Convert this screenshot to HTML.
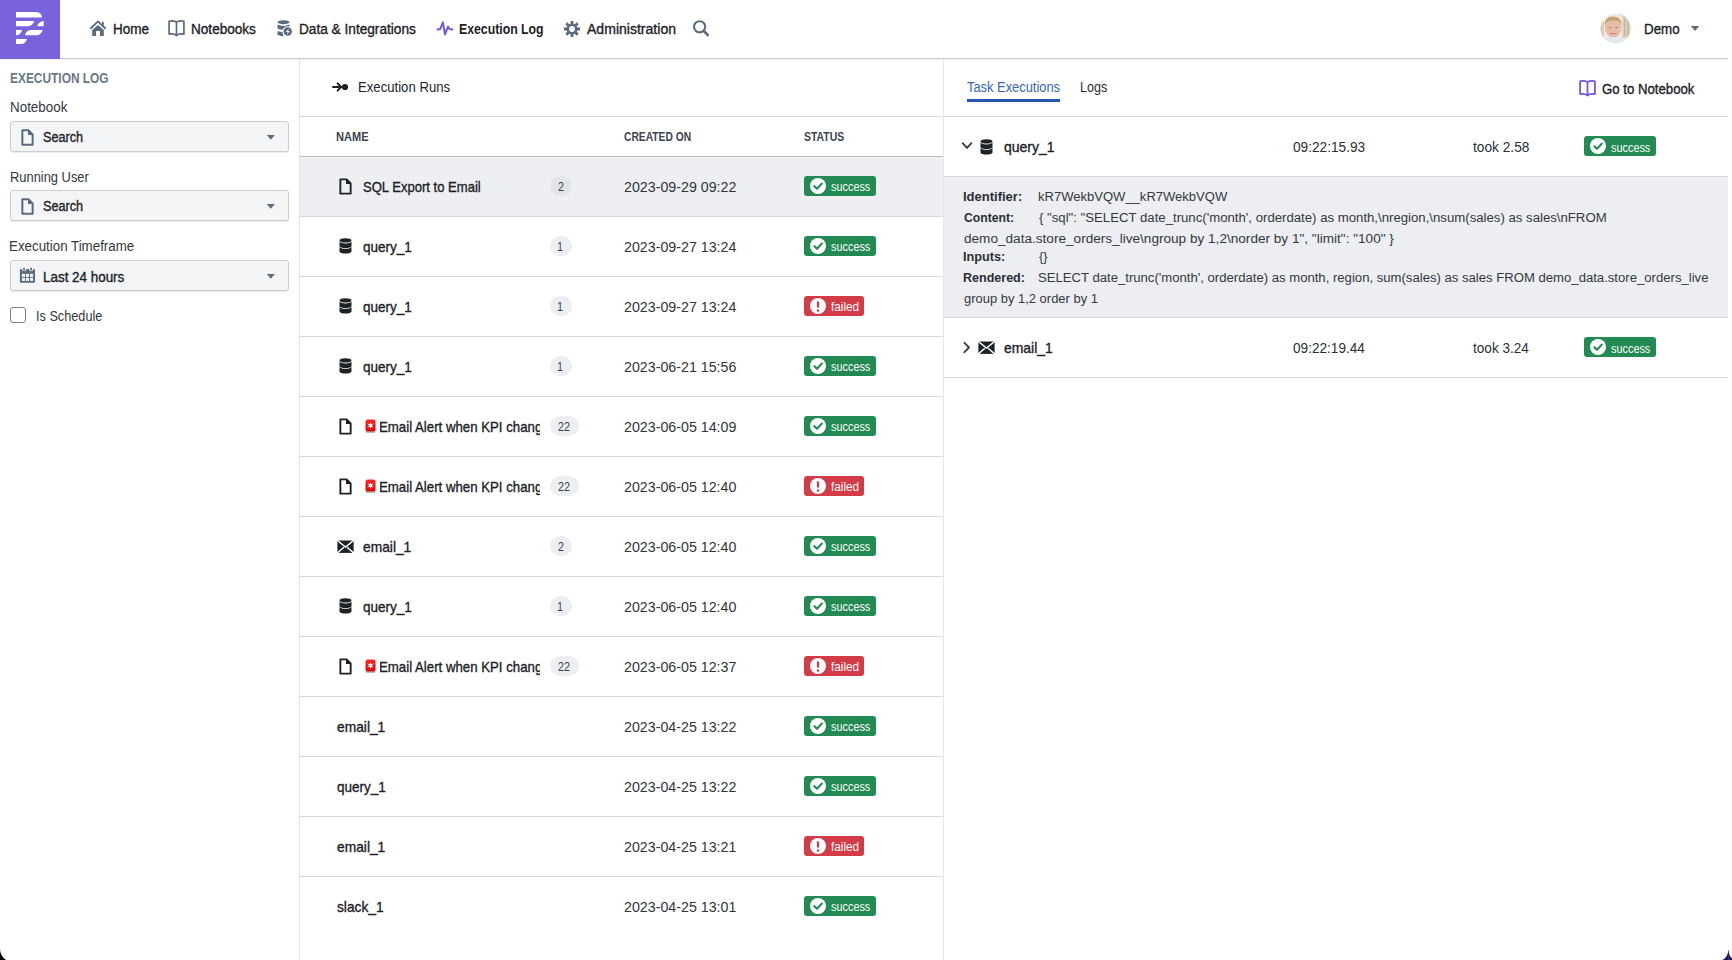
<!DOCTYPE html>
<html><head><meta charset="utf-8"><title>Execution Log</title>
<style>
html,body{margin:0;padding:0;width:1732px;height:960px;overflow:hidden;background:#fff}
body{position:relative;font-family:"Liberation Sans", sans-serif}
.t{position:absolute;white-space:pre;line-height:20px;transform-origin:0 0;font-family:"Liberation Sans", sans-serif}
svg{display:block}
</style></head><body>
<div style="position:absolute;left:0px;top:0px;width:1732px;height:58px;background:#fff"></div>
<div style="position:absolute;left:0px;top:58px;width:1728px;height:1px;background:#c8c8c8"></div>
<div style="position:absolute;left:0px;top:59px;width:1728px;height:1px;background:#f3f3f3"></div>
<div style="position:absolute;left:299px;top:59px;width:1px;height:901px;background:#e4e4e4"></div>
<div style="position:absolute;left:943px;top:59px;width:1px;height:901px;background:#e6e6e6"></div>
<div style="position:absolute;left:300px;top:116px;width:643px;height:1px;background:#d4d8e0"></div>
<div style="position:absolute;left:300px;top:156px;width:643px;height:1px;background:#babbbe"></div>
<div style="position:absolute;left:300px;top:157px;width:643px;height:59px;background:#eeeff2"></div>
<div style="position:absolute;left:300px;top:157px;width:643px;height:1px;background:#f3f4f6"></div>
<div style="position:absolute;left:300px;top:216px;width:643px;height:1px;background:#d4d8e0"></div>
<div style="position:absolute;left:300px;top:276px;width:643px;height:1px;background:#d4d8e0"></div>
<div style="position:absolute;left:300px;top:336px;width:643px;height:1px;background:#d4d8e0"></div>
<div style="position:absolute;left:300px;top:396px;width:643px;height:1px;background:#d4d8e0"></div>
<div style="position:absolute;left:300px;top:456px;width:643px;height:1px;background:#d4d8e0"></div>
<div style="position:absolute;left:300px;top:516px;width:643px;height:1px;background:#d4d8e0"></div>
<div style="position:absolute;left:300px;top:576px;width:643px;height:1px;background:#d4d8e0"></div>
<div style="position:absolute;left:300px;top:636px;width:643px;height:1px;background:#d4d8e0"></div>
<div style="position:absolute;left:300px;top:696px;width:643px;height:1px;background:#d4d8e0"></div>
<div style="position:absolute;left:300px;top:756px;width:643px;height:1px;background:#d4d8e0"></div>
<div style="position:absolute;left:300px;top:816px;width:643px;height:1px;background:#d4d8e0"></div>
<div style="position:absolute;left:300px;top:876px;width:643px;height:1px;background:#d4d8e0"></div>
<div style="position:absolute;left:944px;top:116px;width:784px;height:1px;background:#d4d8e0"></div>
<div style="position:absolute;left:944px;top:176px;width:784px;height:1px;background:#d3d7de"></div>
<div style="position:absolute;left:944px;top:177px;width:784px;height:140px;background:#edeef2"></div>
<div style="position:absolute;left:944px;top:317px;width:784px;height:1px;background:#d3d7de"></div>
<div style="position:absolute;left:944px;top:377px;width:784px;height:1px;background:#d4d8e0"></div>
<div style="position:absolute;left:967px;top:99px;width:93px;height:3px;background:#2458b3"></div>
<div style="position:absolute;left:0px;top:0px;width:60px;height:59px;background:#7a62da"></div>
<svg style="position:absolute;left:0px;top:0px" width="60" height="59" viewBox="0 0 60 59"><g fill="#fff"><path d="M16 12H36Q41.8 12.3 42 17.5H16Z"/><path d="M16 21.1H34.3Q32.6 26.2 28.5 26.2H16Z"/><path d="M37.2 26.2Q38.8 21.3 43.7 21.1V26.2Z"/><path d="M16 30H22.2Q20.7 35.3 16 35.3Z"/><path d="M24.8 35.3Q26.4 30 31.5 30H42.6Q41 35.3 36.5 35.3Z"/><path d="M16 39H27Q25.6 44.1 21 44.1H16Z"/></g></svg>
<svg style="position:absolute;left:89px;top:19px" width="18" height="19" viewBox="0 0 18 19"><g fill="#5b6b7f"><path d="M1.9 9.2L9 2.4L16.1 9.2" fill="none" stroke="#5b6b7f" stroke-width="1.9" stroke-linecap="round" stroke-linejoin="round"/><rect x="13" y="2.8" width="1.8" height="4.4"/><path d="M3.2 11L9 5.9L14.8 11V17H11V12.1H7V17H3.2Z"/></g></svg>
<svg style="position:absolute;left:168px;top:20px" width="17" height="17" viewBox="0 0 17 17"><path d="M1.1 1.3Q4.2 0.3 7.4 1.5L8.5 2.4L9.6 1.5Q12.8 0.3 15.9 1.3V14.2Q12.8 13.6 10 14.5L8.5 15.6L7 14.5Q4.2 13.6 1.1 14.2Z M8.5 2.4V15.2" fill="none" stroke="#5b6b7f" stroke-width="1.7" stroke-linejoin="round"/></svg>
<svg style="position:absolute;left:276px;top:19px" width="18" height="19" viewBox="0 0 18 19"><g fill="#5b6b7f"><ellipse cx="7.5" cy="3.2" rx="6" ry="2"/><path d="M1.5 5.6Q7.5 8.2 13.5 5.6V7.6Q10 8.6 7.8 11Q4 11 1.5 9.6Z"/><path d="M1.5 12Q4 13 7 13Q6.6 15.2 7.8 17.2Q3.2 17 1.5 15.8Z"/><circle cx="11.7" cy="12.5" r="4.8" stroke="#fff" stroke-width="1.1"/></g><path d="M13.1 9.2L9.9 13.1H11.8L10.7 16.1L13.7 12H11.8Z" fill="#fff"/></svg>
<svg style="position:absolute;left:436px;top:20px" width="18" height="17" viewBox="0 0 18 17"><polyline points="1.6,9.4 4.3,9 6.9,2.4 9,14.4 12,6.6 13.5,9 16.4,9.4" fill="none" stroke="#7358de" stroke-width="2" stroke-linejoin="round" stroke-linecap="round"/></svg>
<svg style="position:absolute;left:562.5px;top:19.5px" width="18" height="18" viewBox="0 0 18 18"><g fill="#5b6b7f"><rect x="7.6" y="0.9" width="2.8" height="3.8" rx="0.4" transform="rotate(0 9 9)"/><rect x="7.6" y="0.9" width="2.8" height="3.8" rx="0.4" transform="rotate(45 9 9)"/><rect x="7.6" y="0.9" width="2.8" height="3.8" rx="0.4" transform="rotate(90 9 9)"/><rect x="7.6" y="0.9" width="2.8" height="3.8" rx="0.4" transform="rotate(135 9 9)"/><rect x="7.6" y="0.9" width="2.8" height="3.8" rx="0.4" transform="rotate(180 9 9)"/><rect x="7.6" y="0.9" width="2.8" height="3.8" rx="0.4" transform="rotate(225 9 9)"/><rect x="7.6" y="0.9" width="2.8" height="3.8" rx="0.4" transform="rotate(270 9 9)"/><rect x="7.6" y="0.9" width="2.8" height="3.8" rx="0.4" transform="rotate(315 9 9)"/><circle cx="9" cy="9" r="5.5"/></g><circle cx="9" cy="9" r="2.9" fill="#fff"/></svg>
<svg style="position:absolute;left:692px;top:19px" width="18" height="19" viewBox="0 0 18 19"><circle cx="7.6" cy="7.8" r="5.6" fill="none" stroke="#5b6b7f" stroke-width="2.1"/><line x1="11.8" y1="12" x2="15.8" y2="16" stroke="#5b6b7f" stroke-width="2.6" stroke-linecap="round"/></svg>
<svg style="position:absolute;left:1600px;top:13px" width="31" height="31" viewBox="0 0 31 31"><defs><clipPath id="av"><circle cx="15.5" cy="15.5" r="15"/></clipPath></defs><g clip-path="url(#av)"><rect width="31" height="31" fill="#f1ebe3"/><rect x="0" y="8" width="4" height="16" fill="#d9cfbf"/><rect x="22" y="3" width="9" height="22" fill="#ddd3c3"/><rect x="24" y="6" width="1.5" height="17" fill="#c4b8a4"/><rect x="27.5" y="6" width="1.5" height="17" fill="#c4b8a4"/><path d="M2 31Q5 23 13 23Q23 23 27 31Z" fill="#e1eaf0"/><ellipse cx="13.2" cy="14.6" rx="8.3" ry="10" fill="#e9bca6"/><path d="M4.8 12.5Q4.6 3.2 13 3.4Q21.6 3.6 21.6 12Q19.8 7.6 13 7.6Q7 7.8 4.8 12.5Z" fill="#c8a172"/><ellipse cx="10" cy="14.5" rx="1.2" ry="0.7" fill="#9a7a66"/><ellipse cx="16.5" cy="14.5" rx="1.2" ry="0.7" fill="#9a7a66"/><path d="M10 20Q13.2 22 16.6 20" stroke="#b98474" stroke-width="1" fill="none"/><path d="M20 0.5Q25 1.5 26.5 5" stroke="#e48c7c" stroke-width="2" fill="none"/></g></svg>
<svg style="position:absolute;left:1690px;top:25px" width="10" height="7" viewBox="0 0 10 7"><path d="M0.8 1H9.2L5 6Z" fill="#5b6b7f"/></svg>
<div style="position:absolute;left:10px;top:121px;width:279px;height:31px;box-sizing:border-box;background:#f4f5f7;border:1px solid #c9cdd4;border-radius:3px;box-shadow:0 1px 0 rgba(60,70,80,0.10)"></div>
<svg style="position:absolute;left:266px;top:134px" width="10" height="7" viewBox="0 0 10 7"><path d="M0.8 1H8.8L4.8 5.8Z" fill="#5b6b7f"/></svg>
<svg style="position:absolute;left:21.2px;top:129px" width="13" height="17" viewBox="0 0 13 17"><path d="M1.35 1.35H7.6L11.65 5.4V15.65H1.35Z" fill="none" stroke="#5b6b7f" stroke-width="2" stroke-linejoin="round"/><path d="M7 0.8V6H12.2Z" fill="#5b6b7f"/></svg>
<div style="position:absolute;left:10px;top:190px;width:279px;height:31px;box-sizing:border-box;background:#f4f5f7;border:1px solid #c9cdd4;border-radius:3px;box-shadow:0 1px 0 rgba(60,70,80,0.10)"></div>
<svg style="position:absolute;left:266px;top:203px" width="10" height="7" viewBox="0 0 10 7"><path d="M0.8 1H8.8L4.8 5.8Z" fill="#5b6b7f"/></svg>
<svg style="position:absolute;left:21.2px;top:198px" width="13" height="17" viewBox="0 0 13 17"><path d="M1.35 1.35H7.6L11.65 5.4V15.65H1.35Z" fill="none" stroke="#5b6b7f" stroke-width="2" stroke-linejoin="round"/><path d="M7 0.8V6H12.2Z" fill="#5b6b7f"/></svg>
<div style="position:absolute;left:10px;top:260px;width:279px;height:31px;box-sizing:border-box;background:#f4f5f7;border:1px solid #c9cdd4;border-radius:3px;box-shadow:0 1px 0 rgba(60,70,80,0.10)"></div>
<svg style="position:absolute;left:266px;top:273px" width="10" height="7" viewBox="0 0 10 7"><path d="M0.8 1H8.8L4.8 5.8Z" fill="#5b6b7f"/></svg>
<svg style="position:absolute;left:19px;top:267px" width="17" height="17" viewBox="0 0 17 17"><rect x="0.9" y="2" width="15.1" height="13.8" rx="1" fill="#5b6b7f"/><g fill="#f4f5f7"><circle cx="5" cy="2.2" r="2.1"/><circle cx="12.1" cy="2.2" r="2.1"/><rect x="2.9" y="6.8" width="3.1" height="3.1"/><rect x="6.9" y="6.8" width="3.1" height="3.1"/><rect x="11" y="6.8" width="3.1" height="3.1"/><rect x="2.9" y="10.8" width="3.1" height="3.1"/><rect x="6.9" y="10.8" width="3.1" height="3.1"/><rect x="11" y="10.8" width="3.1" height="3.1"/></g><g fill="#5b6b7f"><rect x="4.1" y="0.8" width="1.8" height="2.8" rx="0.4"/><rect x="11.2" y="0.8" width="1.8" height="2.8" rx="0.4"/></g></svg>
<div style="position:absolute;left:10px;top:307px;width:16px;height:16px;box-sizing:border-box;border:1.5px solid #76818f;border-radius:3px;background:#fff"></div>
<svg style="position:absolute;left:331px;top:81px" width="19" height="12" viewBox="0 0 19 12"><g stroke="#1d2227" stroke-width="2" fill="none" stroke-linecap="round" stroke-linejoin="round"><line x1="2" y1="6" x2="10" y2="6"/><polyline points="6.6,2.4 10,6 6.6,9.6"/></g><circle cx="14" cy="6" r="3.1" fill="#1d2227"/></svg>
<svg style="position:absolute;left:338.5px;top:177.5px" width="13" height="17" viewBox="0 0 13 17"><path d="M1.35 1.35H7.6L11.65 5.4V15.65H1.35Z" fill="none" stroke="#1d2227" stroke-width="1.9" stroke-linejoin="round"/><path d="M7 0.8V6H12.2Z" fill="#1d2227"/></svg>
<div style="position:absolute;left:550px;top:176px;width:22px;height:20px;background:#e1e4e8;border-radius:10px"></div>
<div style="position:absolute;left:804px;top:176px;width:72px;height:20px;background:#228a52;border-radius:3px"></div>
<svg style="position:absolute;left:810px;top:178px" width="16" height="16" viewBox="0 0 16 16"><circle cx="8" cy="8" r="8" fill="#fff"/><path d="M4.4 8.2L7 10.8L11.8 5.6" fill="none" stroke="#228a52" stroke-width="2.1" stroke-linecap="round" stroke-linejoin="round"/></svg>
<svg style="position:absolute;left:338.5px;top:237.5px" width="13" height="17" viewBox="0 0 13 17"><g fill="#1d2227"><ellipse cx="6.5" cy="2.4" rx="6" ry="2.2"/><path d="M0.5 3.2A6 2.2 0 0 0 12.5 3.2V7.9A6 2.2 0 0 1 0.5 7.9Z"/><path d="M0.5 8.6A6 2.2 0 0 0 12.5 8.6V13.4A6 2.2 0 0 1 0.5 13.4Z"/></g></svg>
<div style="position:absolute;left:550px;top:236px;width:22px;height:20px;background:#eceef1;border-radius:10px"></div>
<div style="position:absolute;left:804px;top:236px;width:72px;height:20px;background:#228a52;border-radius:3px"></div>
<svg style="position:absolute;left:810px;top:238px" width="16" height="16" viewBox="0 0 16 16"><circle cx="8" cy="8" r="8" fill="#fff"/><path d="M4.4 8.2L7 10.8L11.8 5.6" fill="none" stroke="#228a52" stroke-width="2.1" stroke-linecap="round" stroke-linejoin="round"/></svg>
<svg style="position:absolute;left:338.5px;top:297.5px" width="13" height="17" viewBox="0 0 13 17"><g fill="#1d2227"><ellipse cx="6.5" cy="2.4" rx="6" ry="2.2"/><path d="M0.5 3.2A6 2.2 0 0 0 12.5 3.2V7.9A6 2.2 0 0 1 0.5 7.9Z"/><path d="M0.5 8.6A6 2.2 0 0 0 12.5 8.6V13.4A6 2.2 0 0 1 0.5 13.4Z"/></g></svg>
<div style="position:absolute;left:550px;top:296px;width:22px;height:20px;background:#eceef1;border-radius:10px"></div>
<div style="position:absolute;left:804px;top:296px;width:60px;height:20px;background:#d33c47;border-radius:3px"></div>
<svg style="position:absolute;left:810px;top:298px" width="16" height="16" viewBox="0 0 16 16"><circle cx="8" cy="8" r="8" fill="#fff"/><rect x="6.9" y="3.2" width="2.2" height="6.6" rx="1" fill="#d33c47"/><circle cx="8" cy="12.4" r="1.25" fill="#d33c47"/></svg>
<svg style="position:absolute;left:338.5px;top:357.5px" width="13" height="17" viewBox="0 0 13 17"><g fill="#1d2227"><ellipse cx="6.5" cy="2.4" rx="6" ry="2.2"/><path d="M0.5 3.2A6 2.2 0 0 0 12.5 3.2V7.9A6 2.2 0 0 1 0.5 7.9Z"/><path d="M0.5 8.6A6 2.2 0 0 0 12.5 8.6V13.4A6 2.2 0 0 1 0.5 13.4Z"/></g></svg>
<div style="position:absolute;left:550px;top:356px;width:22px;height:20px;background:#eceef1;border-radius:10px"></div>
<div style="position:absolute;left:804px;top:356px;width:72px;height:20px;background:#228a52;border-radius:3px"></div>
<svg style="position:absolute;left:810px;top:358px" width="16" height="16" viewBox="0 0 16 16"><circle cx="8" cy="8" r="8" fill="#fff"/><path d="M4.4 8.2L7 10.8L11.8 5.6" fill="none" stroke="#228a52" stroke-width="2.1" stroke-linecap="round" stroke-linejoin="round"/></svg>
<svg style="position:absolute;left:338.5px;top:417.5px" width="13" height="17" viewBox="0 0 13 17"><path d="M1.35 1.35H7.6L11.65 5.4V15.65H1.35Z" fill="none" stroke="#1d2227" stroke-width="1.9" stroke-linejoin="round"/><path d="M7 0.8V6H12.2Z" fill="#1d2227"/></svg>
<svg style="position:absolute;left:364.5px;top:418.5px" width="11" height="14" viewBox="0 0 11 14"><defs><linearGradient id="sg" x1="0" y1="0" x2="0" y2="1"><stop offset="0" stop-color="#ff2a20"/><stop offset="1" stop-color="#e00000"/></linearGradient></defs><rect x="0.5" y="0.5" width="10" height="12.5" rx="2.2" fill="url(#sg)"/><rect x="1" y="12.2" width="9" height="1.6" rx="0.6" fill="#9aa4a0"/><path d="M5.5 3L6.2 5.3L8.6 4.6L6.9 6.5L8.6 8.4L6.2 7.7L5.5 10L4.8 7.7L2.4 8.4L4.1 6.5L2.4 4.6L4.8 5.3Z" fill="#fff"/></svg>
<div style="position:absolute;left:380px;top:414px;width:160px;height:24px;overflow:hidden">
<div class="t" style="left:-0.61px;top:3.00px;font-size:14.5px;font-weight:400;-webkit-text-stroke:0.35px #1d2227;color:#1d2227;transform:scaleX(0.9124);">Email Alert when KPI changes</div>
</div>
<div style="position:absolute;left:550px;top:416px;width:29px;height:20px;background:#eceef1;border-radius:10px"></div>
<div style="position:absolute;left:804px;top:416px;width:72px;height:20px;background:#228a52;border-radius:3px"></div>
<svg style="position:absolute;left:810px;top:418px" width="16" height="16" viewBox="0 0 16 16"><circle cx="8" cy="8" r="8" fill="#fff"/><path d="M4.4 8.2L7 10.8L11.8 5.6" fill="none" stroke="#228a52" stroke-width="2.1" stroke-linecap="round" stroke-linejoin="round"/></svg>
<svg style="position:absolute;left:338.5px;top:477.5px" width="13" height="17" viewBox="0 0 13 17"><path d="M1.35 1.35H7.6L11.65 5.4V15.65H1.35Z" fill="none" stroke="#1d2227" stroke-width="1.9" stroke-linejoin="round"/><path d="M7 0.8V6H12.2Z" fill="#1d2227"/></svg>
<svg style="position:absolute;left:364.5px;top:478.5px" width="11" height="14" viewBox="0 0 11 14"><defs><linearGradient id="sg" x1="0" y1="0" x2="0" y2="1"><stop offset="0" stop-color="#ff2a20"/><stop offset="1" stop-color="#e00000"/></linearGradient></defs><rect x="0.5" y="0.5" width="10" height="12.5" rx="2.2" fill="url(#sg)"/><rect x="1" y="12.2" width="9" height="1.6" rx="0.6" fill="#9aa4a0"/><path d="M5.5 3L6.2 5.3L8.6 4.6L6.9 6.5L8.6 8.4L6.2 7.7L5.5 10L4.8 7.7L2.4 8.4L4.1 6.5L2.4 4.6L4.8 5.3Z" fill="#fff"/></svg>
<div style="position:absolute;left:380px;top:474px;width:160px;height:24px;overflow:hidden">
<div class="t" style="left:-0.61px;top:3.00px;font-size:14.5px;font-weight:400;-webkit-text-stroke:0.35px #1d2227;color:#1d2227;transform:scaleX(0.9124);">Email Alert when KPI changes</div>
</div>
<div style="position:absolute;left:550px;top:476px;width:29px;height:20px;background:#eceef1;border-radius:10px"></div>
<div style="position:absolute;left:804px;top:476px;width:60px;height:20px;background:#d33c47;border-radius:3px"></div>
<svg style="position:absolute;left:810px;top:478px" width="16" height="16" viewBox="0 0 16 16"><circle cx="8" cy="8" r="8" fill="#fff"/><rect x="6.9" y="3.2" width="2.2" height="6.6" rx="1" fill="#d33c47"/><circle cx="8" cy="12.4" r="1.25" fill="#d33c47"/></svg>
<svg style="position:absolute;left:336.5px;top:539.5px" width="17" height="14" viewBox="0 0 17 14"><rect x="0.4" y="0.5" width="16.2" height="12.4" fill="#1d2227"/><path d="M0.2 0.3L8.5 7L16.8 0.3M0.2 13.1L6.9 7.2M16.8 13.1L10.1 7.2" stroke="#fff" stroke-width="1.4" fill="none"/></svg>
<div style="position:absolute;left:550px;top:536px;width:22px;height:20px;background:#eceef1;border-radius:10px"></div>
<div style="position:absolute;left:804px;top:536px;width:72px;height:20px;background:#228a52;border-radius:3px"></div>
<svg style="position:absolute;left:810px;top:538px" width="16" height="16" viewBox="0 0 16 16"><circle cx="8" cy="8" r="8" fill="#fff"/><path d="M4.4 8.2L7 10.8L11.8 5.6" fill="none" stroke="#228a52" stroke-width="2.1" stroke-linecap="round" stroke-linejoin="round"/></svg>
<svg style="position:absolute;left:338.5px;top:597.5px" width="13" height="17" viewBox="0 0 13 17"><g fill="#1d2227"><ellipse cx="6.5" cy="2.4" rx="6" ry="2.2"/><path d="M0.5 3.2A6 2.2 0 0 0 12.5 3.2V7.9A6 2.2 0 0 1 0.5 7.9Z"/><path d="M0.5 8.6A6 2.2 0 0 0 12.5 8.6V13.4A6 2.2 0 0 1 0.5 13.4Z"/></g></svg>
<div style="position:absolute;left:550px;top:596px;width:22px;height:20px;background:#eceef1;border-radius:10px"></div>
<div style="position:absolute;left:804px;top:596px;width:72px;height:20px;background:#228a52;border-radius:3px"></div>
<svg style="position:absolute;left:810px;top:598px" width="16" height="16" viewBox="0 0 16 16"><circle cx="8" cy="8" r="8" fill="#fff"/><path d="M4.4 8.2L7 10.8L11.8 5.6" fill="none" stroke="#228a52" stroke-width="2.1" stroke-linecap="round" stroke-linejoin="round"/></svg>
<svg style="position:absolute;left:338.5px;top:657.5px" width="13" height="17" viewBox="0 0 13 17"><path d="M1.35 1.35H7.6L11.65 5.4V15.65H1.35Z" fill="none" stroke="#1d2227" stroke-width="1.9" stroke-linejoin="round"/><path d="M7 0.8V6H12.2Z" fill="#1d2227"/></svg>
<svg style="position:absolute;left:364.5px;top:658.5px" width="11" height="14" viewBox="0 0 11 14"><defs><linearGradient id="sg" x1="0" y1="0" x2="0" y2="1"><stop offset="0" stop-color="#ff2a20"/><stop offset="1" stop-color="#e00000"/></linearGradient></defs><rect x="0.5" y="0.5" width="10" height="12.5" rx="2.2" fill="url(#sg)"/><rect x="1" y="12.2" width="9" height="1.6" rx="0.6" fill="#9aa4a0"/><path d="M5.5 3L6.2 5.3L8.6 4.6L6.9 6.5L8.6 8.4L6.2 7.7L5.5 10L4.8 7.7L2.4 8.4L4.1 6.5L2.4 4.6L4.8 5.3Z" fill="#fff"/></svg>
<div style="position:absolute;left:380px;top:654px;width:160px;height:24px;overflow:hidden">
<div class="t" style="left:-0.61px;top:3.00px;font-size:14.5px;font-weight:400;-webkit-text-stroke:0.35px #1d2227;color:#1d2227;transform:scaleX(0.9124);">Email Alert when KPI changes</div>
</div>
<div style="position:absolute;left:550px;top:656px;width:29px;height:20px;background:#eceef1;border-radius:10px"></div>
<div style="position:absolute;left:804px;top:656px;width:60px;height:20px;background:#d33c47;border-radius:3px"></div>
<svg style="position:absolute;left:810px;top:658px" width="16" height="16" viewBox="0 0 16 16"><circle cx="8" cy="8" r="8" fill="#fff"/><rect x="6.9" y="3.2" width="2.2" height="6.6" rx="1" fill="#d33c47"/><circle cx="8" cy="12.4" r="1.25" fill="#d33c47"/></svg>
<div style="position:absolute;left:804px;top:716px;width:72px;height:20px;background:#228a52;border-radius:3px"></div>
<svg style="position:absolute;left:810px;top:718px" width="16" height="16" viewBox="0 0 16 16"><circle cx="8" cy="8" r="8" fill="#fff"/><path d="M4.4 8.2L7 10.8L11.8 5.6" fill="none" stroke="#228a52" stroke-width="2.1" stroke-linecap="round" stroke-linejoin="round"/></svg>
<div style="position:absolute;left:804px;top:776px;width:72px;height:20px;background:#228a52;border-radius:3px"></div>
<svg style="position:absolute;left:810px;top:778px" width="16" height="16" viewBox="0 0 16 16"><circle cx="8" cy="8" r="8" fill="#fff"/><path d="M4.4 8.2L7 10.8L11.8 5.6" fill="none" stroke="#228a52" stroke-width="2.1" stroke-linecap="round" stroke-linejoin="round"/></svg>
<div style="position:absolute;left:804px;top:836px;width:60px;height:20px;background:#d33c47;border-radius:3px"></div>
<svg style="position:absolute;left:810px;top:838px" width="16" height="16" viewBox="0 0 16 16"><circle cx="8" cy="8" r="8" fill="#fff"/><rect x="6.9" y="3.2" width="2.2" height="6.6" rx="1" fill="#d33c47"/><circle cx="8" cy="12.4" r="1.25" fill="#d33c47"/></svg>
<div style="position:absolute;left:804px;top:896px;width:72px;height:20px;background:#228a52;border-radius:3px"></div>
<svg style="position:absolute;left:810px;top:898px" width="16" height="16" viewBox="0 0 16 16"><circle cx="8" cy="8" r="8" fill="#fff"/><path d="M4.4 8.2L7 10.8L11.8 5.6" fill="none" stroke="#228a52" stroke-width="2.1" stroke-linecap="round" stroke-linejoin="round"/></svg>
<svg style="position:absolute;left:961px;top:141px" width="12" height="10" viewBox="0 0 12 10"><polyline points="1.6,2.2 6,6.8 10.4,2.2" fill="none" stroke="#3a3f45" stroke-width="1.9" stroke-linecap="round" stroke-linejoin="round"/></svg>
<svg style="position:absolute;left:979.5px;top:138.5px" width="13" height="17" viewBox="0 0 13 17"><g fill="#1d2227"><ellipse cx="6.5" cy="2.4" rx="6" ry="2.2"/><path d="M0.5 3.2A6 2.2 0 0 0 12.5 3.2V7.9A6 2.2 0 0 1 0.5 7.9Z"/><path d="M0.5 8.6A6 2.2 0 0 0 12.5 8.6V13.4A6 2.2 0 0 1 0.5 13.4Z"/></g></svg>
<div style="position:absolute;left:1584px;top:136px;width:72px;height:20px;background:#228a52;border-radius:3px"></div>
<svg style="position:absolute;left:1590px;top:138px" width="16" height="16" viewBox="0 0 16 16"><circle cx="8" cy="8" r="8" fill="#fff"/><path d="M4.4 8.2L7 10.8L11.8 5.6" fill="none" stroke="#228a52" stroke-width="2.1" stroke-linecap="round" stroke-linejoin="round"/></svg>
<svg style="position:absolute;left:962px;top:341px" width="10" height="14" viewBox="0 0 10 14"><polyline points="2.4,1.8 7,6.5 2.4,11.2" fill="none" stroke="#3a3f45" stroke-width="1.9" stroke-linecap="round" stroke-linejoin="round"/></svg>
<svg style="position:absolute;left:977.5px;top:340.5px" width="17" height="14" viewBox="0 0 17 14"><rect x="0.4" y="0.5" width="16.2" height="12.4" fill="#1d2227"/><path d="M0.2 0.3L8.5 7L16.8 0.3M0.2 13.1L6.9 7.2M16.8 13.1L10.1 7.2" stroke="#fff" stroke-width="1.4" fill="none"/></svg>
<div style="position:absolute;left:1584px;top:337px;width:72px;height:20px;background:#228a52;border-radius:3px"></div>
<svg style="position:absolute;left:1590px;top:339px" width="16" height="16" viewBox="0 0 16 16"><circle cx="8" cy="8" r="8" fill="#fff"/><path d="M4.4 8.2L7 10.8L11.8 5.6" fill="none" stroke="#228a52" stroke-width="2.1" stroke-linecap="round" stroke-linejoin="round"/></svg>
<svg style="position:absolute;left:1578.5px;top:79.5px" width="17" height="17" viewBox="0 0 17 17"><path d="M1.1 1.3Q4.2 0.3 7.4 1.5L8.5 2.4L9.6 1.5Q12.8 0.3 15.9 1.3V14.2Q12.8 13.6 10 14.5L8.5 15.6L7 14.5Q4.2 13.6 1.1 14.2Z M8.5 2.4V15.2" fill="none" stroke="#7258de" stroke-width="1.8" stroke-linejoin="round"/></svg>
<svg style="position:absolute;left:0;top:946px" width="14" height="14" viewBox="0 0 14 14"><path d="M0 3A13 13 0 0 0 6 14H0Z" fill="#000"/></svg>
<svg style="position:absolute;left:1716px;top:946px" width="16" height="14" viewBox="0 0 16 14"><path d="M6 14Q12 12 12.5 3Q13 11 16 12V14Z" fill="#15156a"/><path d="M12.2 8L12.6 14H13.4Z" fill="#a0501a"/></svg>
<div class="t" style="left:112.54px;top:19.00px;font-size:14px;font-weight:400;-webkit-text-stroke:0.35px #1d2227;color:#1d2227;transform:scaleX(0.9639);">Home</div>
<div class="t" style="left:191.03px;top:19.00px;font-size:14px;font-weight:400;-webkit-text-stroke:0.35px #1d2227;color:#1d2227;transform:scaleX(0.9697);">Notebooks</div>
<div class="t" style="left:299.23px;top:19.00px;font-size:14px;font-weight:400;-webkit-text-stroke:0.35px #1d2227;color:#1d2227;transform:scaleX(0.9748);">Data &amp; Integrations</div>
<div class="t" style="left:459.42px;top:19.00px;font-size:14px;font-weight:700;color:#1d2227;transform:scaleX(0.8768);">Execution Log</div>
<div class="t" style="left:587.00px;top:19.00px;font-size:14px;font-weight:400;-webkit-text-stroke:0.35px #1d2227;color:#1d2227;transform:scaleX(1.0034);">Administration</div>
<div class="t" style="left:1644.45px;top:19.00px;font-size:14px;font-weight:400;-webkit-text-stroke:0.35px #1d2227;color:#1d2227;transform:scaleX(0.9528);">Demo</div>
<div class="t" style="left:9.65px;top:68.40px;font-size:14px;font-weight:700;color:#6b7888;transform:scaleX(0.8509);">EXECUTION LOG</div>
<div class="t" style="left:9.54px;top:97.10px;font-size:14px;font-weight:400;color:#33383e;transform:scaleX(0.9576);">Notebook</div>
<div class="t" style="left:43.20px;top:126.70px;font-size:14px;font-weight:400;-webkit-text-stroke:0.35px #1d2227;color:#1d2227;transform:scaleX(0.9045);">Search</div>
<div class="t" style="left:9.58px;top:166.60px;font-size:14px;font-weight:400;color:#33383e;transform:scaleX(0.9206);">Running User</div>
<div class="t" style="left:43.20px;top:196.00px;font-size:14px;font-weight:400;-webkit-text-stroke:0.35px #1d2227;color:#1d2227;transform:scaleX(0.9045);">Search</div>
<div class="t" style="left:9.45px;top:235.90px;font-size:14px;font-weight:400;color:#33383e;transform:scaleX(0.9523);">Execution Timeframe</div>
<div class="t" style="left:42.54px;top:266.50px;font-size:14px;font-weight:400;-webkit-text-stroke:0.35px #1d2227;color:#1d2227;transform:scaleX(0.9583);">Last 24 hours</div>
<div class="t" style="left:35.79px;top:305.70px;font-size:14px;font-weight:400;color:#33383e;transform:scaleX(0.9069);">Is Schedule</div>
<div class="t" style="left:357.56px;top:77.10px;font-size:14px;font-weight:400;color:#22272c;transform:scaleX(0.9392);">Execution Runs</div>
<div class="t" style="left:336.42px;top:126.80px;font-size:12.5px;font-weight:700;color:#3c4450;transform:scaleX(0.8833);">NAME</div>
<div class="t" style="left:624.00px;top:126.80px;font-size:12.5px;font-weight:700;color:#3c4450;transform:scaleX(0.8210);">CREATED ON</div>
<div class="t" style="left:803.86px;top:126.80px;font-size:12.5px;font-weight:700;color:#3c4450;transform:scaleX(0.8362);">STATUS</div>
<div class="t" style="left:363.20px;top:177.00px;font-size:14.5px;font-weight:400;-webkit-text-stroke:0.35px #1d2227;color:#1d2227;transform:scaleX(0.9000);">SQL Export to Email</div>
<div class="t" style="left:623.82px;top:177.00px;font-size:14.5px;font-weight:400;color:#30353a;transform:scaleX(0.9814);">2023-09-29 09:22</div>
<div class="t" style="left:363.20px;top:237.00px;font-size:14.5px;font-weight:400;-webkit-text-stroke:0.35px #1d2227;color:#1d2227;transform:scaleX(0.9327);">query_1</div>
<div class="t" style="left:623.82px;top:237.00px;font-size:14.5px;font-weight:400;color:#30353a;transform:scaleX(0.9814);">2023-09-27 13:24</div>
<div class="t" style="left:363.20px;top:297.00px;font-size:14.5px;font-weight:400;-webkit-text-stroke:0.35px #1d2227;color:#1d2227;transform:scaleX(0.9327);">query_1</div>
<div class="t" style="left:623.82px;top:297.00px;font-size:14.5px;font-weight:400;color:#30353a;transform:scaleX(0.9814);">2023-09-27 13:24</div>
<div class="t" style="left:363.20px;top:357.00px;font-size:14.5px;font-weight:400;-webkit-text-stroke:0.35px #1d2227;color:#1d2227;transform:scaleX(0.9327);">query_1</div>
<div class="t" style="left:623.82px;top:357.00px;font-size:14.5px;font-weight:400;color:#30353a;transform:scaleX(0.9814);">2023-06-21 15:56</div>
<div class="t" style="left:623.82px;top:417.00px;font-size:14.5px;font-weight:400;color:#30353a;transform:scaleX(0.9814);">2023-06-05 14:09</div>
<div class="t" style="left:623.82px;top:477.00px;font-size:14.5px;font-weight:400;color:#30353a;transform:scaleX(0.9814);">2023-06-05 12:40</div>
<div class="t" style="left:363.20px;top:537.00px;font-size:14.5px;font-weight:400;-webkit-text-stroke:0.35px #1d2227;color:#1d2227;transform:scaleX(0.9510);">email_1</div>
<div class="t" style="left:623.82px;top:537.00px;font-size:14.5px;font-weight:400;color:#30353a;transform:scaleX(0.9814);">2023-06-05 12:40</div>
<div class="t" style="left:363.20px;top:597.00px;font-size:14.5px;font-weight:400;-webkit-text-stroke:0.35px #1d2227;color:#1d2227;transform:scaleX(0.9327);">query_1</div>
<div class="t" style="left:623.82px;top:597.00px;font-size:14.5px;font-weight:400;color:#30353a;transform:scaleX(0.9814);">2023-06-05 12:40</div>
<div class="t" style="left:623.82px;top:657.00px;font-size:14.5px;font-weight:400;color:#30353a;transform:scaleX(0.9814);">2023-06-05 12:37</div>
<div class="t" style="left:336.90px;top:717.00px;font-size:14.5px;font-weight:400;-webkit-text-stroke:0.35px #1d2227;color:#1d2227;transform:scaleX(0.9510);">email_1</div>
<div class="t" style="left:623.82px;top:717.00px;font-size:14.5px;font-weight:400;color:#30353a;transform:scaleX(0.9814);">2023-04-25 13:22</div>
<div class="t" style="left:336.90px;top:777.00px;font-size:14.5px;font-weight:400;-webkit-text-stroke:0.35px #1d2227;color:#1d2227;transform:scaleX(0.9327);">query_1</div>
<div class="t" style="left:623.82px;top:777.00px;font-size:14.5px;font-weight:400;color:#30353a;transform:scaleX(0.9814);">2023-04-25 13:22</div>
<div class="t" style="left:336.90px;top:837.00px;font-size:14.5px;font-weight:400;-webkit-text-stroke:0.35px #1d2227;color:#1d2227;transform:scaleX(0.9510);">email_1</div>
<div class="t" style="left:623.82px;top:837.00px;font-size:14.5px;font-weight:400;color:#30353a;transform:scaleX(0.9814);">2023-04-25 13:21</div>
<div class="t" style="left:336.90px;top:897.00px;font-size:14.5px;font-weight:400;-webkit-text-stroke:0.35px #1d2227;color:#1d2227;transform:scaleX(0.9469);">slack_1</div>
<div class="t" style="left:623.82px;top:897.00px;font-size:14.5px;font-weight:400;color:#30353a;transform:scaleX(0.9814);">2023-04-25 13:01</div>
<div class="t" style="left:966.90px;top:76.90px;font-size:14px;font-weight:400;color:#3468b4;transform:scaleX(0.9198);">Task Executions</div>
<div class="t" style="left:1079.90px;top:76.90px;font-size:14px;font-weight:400;color:#2a2f35;transform:scaleX(0.9034);">Logs</div>
<div class="t" style="left:1602.20px;top:78.60px;font-size:14px;font-weight:400;-webkit-text-stroke:0.35px #1d2227;color:#1d2227;transform:scaleX(0.9429);">Go to Notebook</div>
<div class="t" style="left:1003.70px;top:136.80px;font-size:14.5px;font-weight:400;-webkit-text-stroke:0.35px #1d2227;color:#1d2227;transform:scaleX(0.9654);">query_1</div>
<div class="t" style="left:1292.80px;top:136.70px;font-size:14.5px;font-weight:400;color:#2b3036;transform:scaleX(0.9421);">09:22:15.93</div>
<div class="t" style="left:1472.70px;top:136.70px;font-size:14.5px;font-weight:400;color:#2b3036;transform:scaleX(0.9458);">took 2.58</div>
<div class="t" style="left:1003.60px;top:337.80px;font-size:14.5px;font-weight:400;-webkit-text-stroke:0.35px #1d2227;color:#1d2227;transform:scaleX(0.9588);">email_1</div>
<div class="t" style="left:1293.00px;top:337.70px;font-size:14.5px;font-weight:400;color:#2b3036;transform:scaleX(0.9382);">09:22:19.44</div>
<div class="t" style="left:1472.70px;top:337.70px;font-size:14.5px;font-weight:400;color:#2b3036;transform:scaleX(0.9373);">took 3.24</div>
<div class="t" style="left:963.16px;top:187.20px;font-size:12.5px;font-weight:700;color:#2a2f35;transform:scaleX(1.0400);">Identifier:</div>
<div class="t" style="left:1037.76px;top:187.20px;font-size:12.5px;font-weight:400;color:#33383e;transform:scaleX(1.0425);">kR7WekbVQW__kR7WekbVQW</div>
<div class="t" style="left:964.20px;top:207.50px;font-size:12.5px;font-weight:700;color:#2a2f35;transform:scaleX(0.9745);">Content:</div>
<div class="t" style="left:1039.00px;top:207.50px;font-size:12.5px;font-weight:400;color:#33383e;transform:scaleX(1.0546);">{ &quot;sql&quot;: &quot;SELECT date_trunc(&#x27;month&#x27;, orderdate) as month,\nregion,\nsum(sales) as sales\nFROM</div>
<div class="t" style="left:964.20px;top:229.20px;font-size:12.5px;font-weight:400;color:#33383e;transform:scaleX(1.0874);">demo_data.store_orders_live\ngroup by 1,2\norder by 1&quot;, &quot;limit&quot;: &quot;100&quot; }</div>
<div class="t" style="left:963.19px;top:247.20px;font-size:12.5px;font-weight:700;color:#2a2f35;transform:scaleX(1.0150);">Inputs:</div>
<div class="t" style="left:1039.20px;top:247.20px;font-size:12.5px;font-weight:400;color:#33383e;transform:scaleX(1.0333);">{}</div>
<div class="t" style="left:963.20px;top:267.80px;font-size:12.5px;font-weight:700;color:#2a2f35;transform:scaleX(1.0017);">Rendered:</div>
<div class="t" style="left:1037.95px;top:267.80px;font-size:12.5px;font-weight:400;color:#33383e;transform:scaleX(1.0494);">SELECT date_trunc(&#x27;month&#x27;, orderdate) as month, region, sum(sales) as sales FROM demo_data.store_orders_live</div>
<div class="t" style="left:964.20px;top:288.80px;font-size:12.5px;font-weight:400;color:#33383e;transform:scaleX(1.0364);">group by 1,2 order by 1</div>
<div class="t" style="left:557.80px;top:176.50px;font-size:12px;font-weight:400;color:#3a3f45;transform:scaleX(0.9000);">2</div>
<div class="t" style="left:831.00px;top:177.00px;font-size:12px;font-weight:400;color:#fff;transform:scaleX(0.9070);">success</div>
<div class="t" style="left:556.90px;top:236.50px;font-size:12px;font-weight:400;color:#3a3f45;transform:scaleX(0.9000);">1</div>
<div class="t" style="left:831.00px;top:237.00px;font-size:12px;font-weight:400;color:#fff;transform:scaleX(0.9070);">success</div>
<div class="t" style="left:556.90px;top:296.50px;font-size:12px;font-weight:400;color:#3a3f45;transform:scaleX(0.9000);">1</div>
<div class="t" style="left:830.80px;top:297.00px;font-size:12px;font-weight:400;color:#fff;transform:scaleX(0.9821);">failed</div>
<div class="t" style="left:556.90px;top:356.50px;font-size:12px;font-weight:400;color:#3a3f45;transform:scaleX(0.9000);">1</div>
<div class="t" style="left:831.00px;top:357.00px;font-size:12px;font-weight:400;color:#fff;transform:scaleX(0.9070);">success</div>
<div class="t" style="left:558.00px;top:416.50px;font-size:12px;font-weight:400;color:#3a3f45;transform:scaleX(0.9000);">22</div>
<div class="t" style="left:831.00px;top:417.00px;font-size:12px;font-weight:400;color:#fff;transform:scaleX(0.9070);">success</div>
<div class="t" style="left:558.00px;top:476.50px;font-size:12px;font-weight:400;color:#3a3f45;transform:scaleX(0.9000);">22</div>
<div class="t" style="left:830.80px;top:477.00px;font-size:12px;font-weight:400;color:#fff;transform:scaleX(0.9821);">failed</div>
<div class="t" style="left:557.80px;top:536.50px;font-size:12px;font-weight:400;color:#3a3f45;transform:scaleX(0.9000);">2</div>
<div class="t" style="left:831.00px;top:537.00px;font-size:12px;font-weight:400;color:#fff;transform:scaleX(0.9070);">success</div>
<div class="t" style="left:556.90px;top:596.50px;font-size:12px;font-weight:400;color:#3a3f45;transform:scaleX(0.9000);">1</div>
<div class="t" style="left:831.00px;top:597.00px;font-size:12px;font-weight:400;color:#fff;transform:scaleX(0.9070);">success</div>
<div class="t" style="left:558.00px;top:656.50px;font-size:12px;font-weight:400;color:#3a3f45;transform:scaleX(0.9000);">22</div>
<div class="t" style="left:830.80px;top:657.00px;font-size:12px;font-weight:400;color:#fff;transform:scaleX(0.9821);">failed</div>
<div class="t" style="left:831.00px;top:717.00px;font-size:12px;font-weight:400;color:#fff;transform:scaleX(0.9070);">success</div>
<div class="t" style="left:831.00px;top:777.00px;font-size:12px;font-weight:400;color:#fff;transform:scaleX(0.9070);">success</div>
<div class="t" style="left:830.80px;top:837.00px;font-size:12px;font-weight:400;color:#fff;transform:scaleX(0.9821);">failed</div>
<div class="t" style="left:831.00px;top:897.00px;font-size:12px;font-weight:400;color:#fff;transform:scaleX(0.9070);">success</div>
<div class="t" style="left:1611.00px;top:137.50px;font-size:12px;font-weight:400;color:#fff;transform:scaleX(0.9070);">success</div>
<div class="t" style="left:1611.00px;top:338.50px;font-size:12px;font-weight:400;color:#fff;transform:scaleX(0.9070);">success</div>
</body></html>
